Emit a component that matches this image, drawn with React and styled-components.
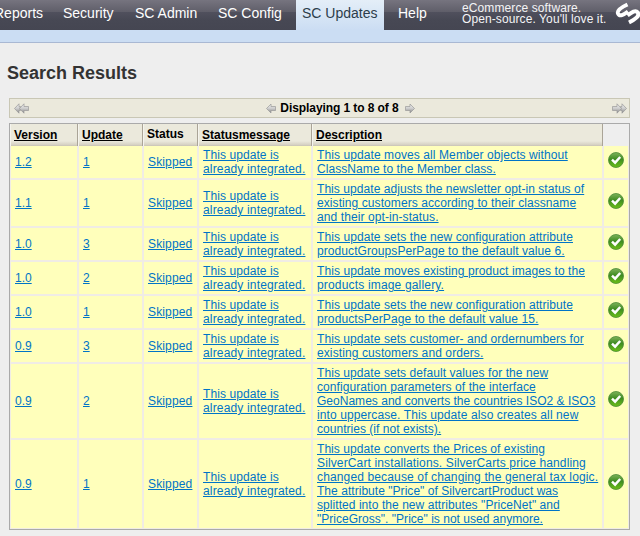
import React from "react";
import styled, { createGlobalStyle } from "styled-components";

const Global = createGlobalStyle`
  *{box-sizing:border-box}
  body{margin:0;background:#eee;font-family:"Liberation Sans",Arial,sans-serif;font-size:12px;color:#000;overflow:hidden}
`;
const Page = styled.div`width:640px;height:536px;overflow:hidden;background:#eee;`;
const TopBar = styled.header`
  display:flex;height:30px;color:#fff;
  background:linear-gradient(#76747f 0,#5f5e69 12px,#50505d 12px,#474854 20px,#454652 30px);
`;
const Tab = styled.a`
  flex:none;width:${p => p.$w}px;height:30px;padding:4px 0 0 ${p => p.$pad}px;
  font-size:14px;line-height:18px;white-space:nowrap;
  color:${p => (p.$active ? "#2c3d4b" : "#fff")};
  background:${p => (p.$active ? "linear-gradient(#e4eef8,#cbddf3)" : "none")};
`;
const CutTab = styled(Tab)`margin-left:-6px;`;
const Slogan = styled.div`
  flex:none;width:153px;padding-top:3px;line-height:11px;white-space:nowrap;color:#f4f4f6;
  letter-spacing:.1px;
`;
const Logo = styled.svg`flex:none;display:block;`;
const SubBar = styled.div`height:13px;background:#cbddf3;border-bottom:1px solid #a9b8d3;`;
const Title = styled.h1`
  margin:20px 0 0 7px;height:20px;font-size:18px;line-height:20px;color:#333;
`;
const Pager = styled.div`
  display:flex;align-items:center;justify-content:space-between;
  margin:15px 10px 0 9px;height:20px;padding:0 2px 0 4px;
  background:#ebe9dc;border:1px solid #c9c7b5;
`;
const PagerCenter = styled.div`
  display:flex;align-items:center;margin-left:40px;font-weight:bold;line-height:18px;
`;
const PagerText = styled.span`margin:0 6px 0 4px;letter-spacing:-.08px;white-space:nowrap;`;
const Table = styled.div`
  width:621px;margin:5px 0 0 9px;border:1px solid #aaa;height:407px;
`;
const Head = styled.div`
  display:grid;grid-template-columns:68px 65px 55px 114px 291px 25px;height:22px;
`;
const HeadCell = styled.div`
  padding:${p => (p.$plain ? 3 : 4)}px 0 0 3px;line-height:14px;font-weight:bold;white-space:nowrap;
  background:linear-gradient(#ebe9dc 0,#ebe9dc 17px,#d5d0c2 21px,#c6c1b4 22px);
  border-right:1px solid #aaa497;border-left:1px solid #f5f4ee;
  text-decoration:${p => (p.$plain ? "none" : "underline")};
  text-underline-offset:1px;
`;
const Body = styled.div`
  display:grid;grid-template-columns:66px 63px 53px 112px 289px 24px;gap:2px;padding:0 1px 1px;
  background:linear-gradient(#f0ece5,#f0ece5) no-repeat 0 0 / 100% 100%;
`;
const Cell = styled.div`
  display:flex;align-items:center;min-height:32px;padding:2px 0 2px 4px;
  background:#ffb;line-height:14px;white-space:nowrap;
`;
const IconCell = styled(Cell)`padding:0 0 4px 4px;`;
const Link = styled.a`color:#0074c7;text-decoration:underline;text-underline-offset:1px;`;
const Line = styled.span`letter-spacing:${p => p.$ls}px;`;

const Arrow = ({ right, double }) => (
  <svg width={double ? 16 : 10} height="11" viewBox={double ? "0 0 16 11" : "0 0 10 11"}>
    <defs>
      <linearGradient id="steel" x1="0" y1="0" x2="0" y2="1">
        <stop offset="0" stopColor="#f2f2f2" /><stop offset=".5" stopColor="#ccc" /><stop offset="1" stopColor="#858585" />
      </linearGradient>
    </defs>
    <g transform={right ? `translate(${double ? 16 : 10} 0) scale(-1 1)` : undefined}
      fill="url(#steel)" stroke="#999" strokeWidth=".7" strokeLinejoin="round">
      {double && <path d="M5.500 5.500 10 .8v2.700h4.500v4H10v2.700z" />}
      <path d={double ? "M.5 5.500 5 .8v2.700h1.500l-1 2 1 2H5v2.700z" : "M.5 5.500 5 1v2.500h4.500v4H5V10z"} />
    </g>
  </svg>
);
const Check = () => (
  <svg width="16" height="16" viewBox="0 0 16 16">
    <defs>
      <linearGradient id="green" x1="0" y1="0" x2="0" y2="1">
        <stop offset="0" stopColor="#7fb35c" /><stop offset=".45" stopColor="#3f8c22" /><stop offset="1" stopColor="#6cc016" />
      </linearGradient>
    </defs>
    <circle cx="8" cy="8" r="7.500" fill="url(#green)" stroke="#4a8a35" strokeWidth=".8" />
    <path d="M4 7.600 7.100 10.600 12.200 5" fill="none" stroke="#fff" strokeWidth="2.500" />
  </svg>
);

// Each description line carries its own tracking.
const rows = [
  ["1.2", "1", [["This update moves all Member objects without", 0.09], ["ClassName to the Member class.", 0.07]]],
  ["1.1", "1", [["This update adjusts the newsletter opt-in status of", 0.06], ["existing customers according to their classname", 0.08], ["and their opt-in-status.", 0.09]]],
  ["1.0", "3", [["This update sets the new configuration attribute", 0.08], ["productGroupsPerPage to the default value 6.", 0.08]]],
  ["1.0", "2", [["This update moves existing product images to the", 0.08], ["products image gallery.", 0.17]]],
  ["1.0", "1", [["This update sets the new configuration attribute", 0.08], ["productsPerPage to the default value 15.", 0.1]]],
  ["0.9", "3", [["This update sets customer- and ordernumbers for", 0.07], ["existing customers and orders.", 0.1]]],
  ["0.9", "2", [["This update sets default values for the new", 0.07], ["configuration parameters of the interface", 0.08], ["GeoNames and converts the countries ISO2 & ISO3", 0.02], ["into uppercase. This update also creates all new", 0.1], ["countries (if not exists).", 0.03]]],
  ["0.9", "1", [["This update converts the Prices of existing", 0.06], ["SilverCart installations. SilverCarts price handling", 0.13], ["changed because of changing the general tax logic.", 0.14], ["The attribute \"Price\" of SilvercartProduct was", 0.04], ["splitted into the new attributes \"PriceNet\" and", 0.06], ["\"PriceGross\". \"Price\" is not used anymore.", 0.02]]],
];
const status = [["This update is", 0.08], ["already integrated.", 0.16]];

const Lines = ({ lines }) => (
  <Link>
    {lines.map(([text, ls], i) => (
      <React.Fragment key={i}>{i > 0 && <br />}<Line $ls={ls}>{text}</Line></React.Fragment>
    ))}
  </Link>
);

export default function App() {
  return (
    <Page>
      <Global />
      <TopBar>
        <CutTab $w={62} $pad={0}>Reports</CutTab>
        <Tab $w={72} $pad={7}>Security</Tab>
        <Tab $w={83} $pad={7}>SC Admin</Tab>
        <Tab $w={85} $pad={7}>SC Config</Tab>
        <Tab $w={88} $pad={6} $active>SC Updates</Tab>
        <Tab $w={78} $pad={14}>Help</Tab>
        <Slogan>eCommerce software.<br />Open-source. You'll love it.</Slogan>
        <Logo width="25" height="30" viewBox="0 0 25 30">
          <g fill="none" stroke="#fff" strokeWidth="4">
            <path d="M12.500 4.500C6 7.500 1.800 10.500 3 13.500C4.500 17 8.500 15 13 11.500" />
            <path d="M12.500 15.500C17 12 20.500 9.500 22.800 12.500C25 16 20 19.500 14 22.500" />
          </g>
        </Logo>
      </TopBar>
      <SubBar />
      <Title>Search Results</Title>
      <Pager>
        <Arrow double />
        <PagerCenter><Arrow /><PagerText>Displaying 1 to 8 of 8</PagerText><Arrow right /></PagerCenter>
        <Arrow double right />
      </Pager>
      <Table>
        <Head>
          <HeadCell>Version</HeadCell><HeadCell>Update</HeadCell><HeadCell $plain>Status</HeadCell>
          <HeadCell>Statusmessage</HeadCell><HeadCell>Description</HeadCell>
        </Head>
        <Body>
          {rows.map(([version, update, description], i) => (
            <React.Fragment key={i}>
              <Cell><Link>{version}</Link></Cell>
              <Cell><Link>{update}</Link></Cell>
              <Cell><Lines lines={[["Skipped", 0.15]]} /></Cell>
              <Cell><Lines lines={status} /></Cell>
              <Cell><Lines lines={description} /></Cell>
              <IconCell><Check /></IconCell>
            </React.Fragment>
          ))}
        </Body>
      </Table>
    </Page>
  );
}
